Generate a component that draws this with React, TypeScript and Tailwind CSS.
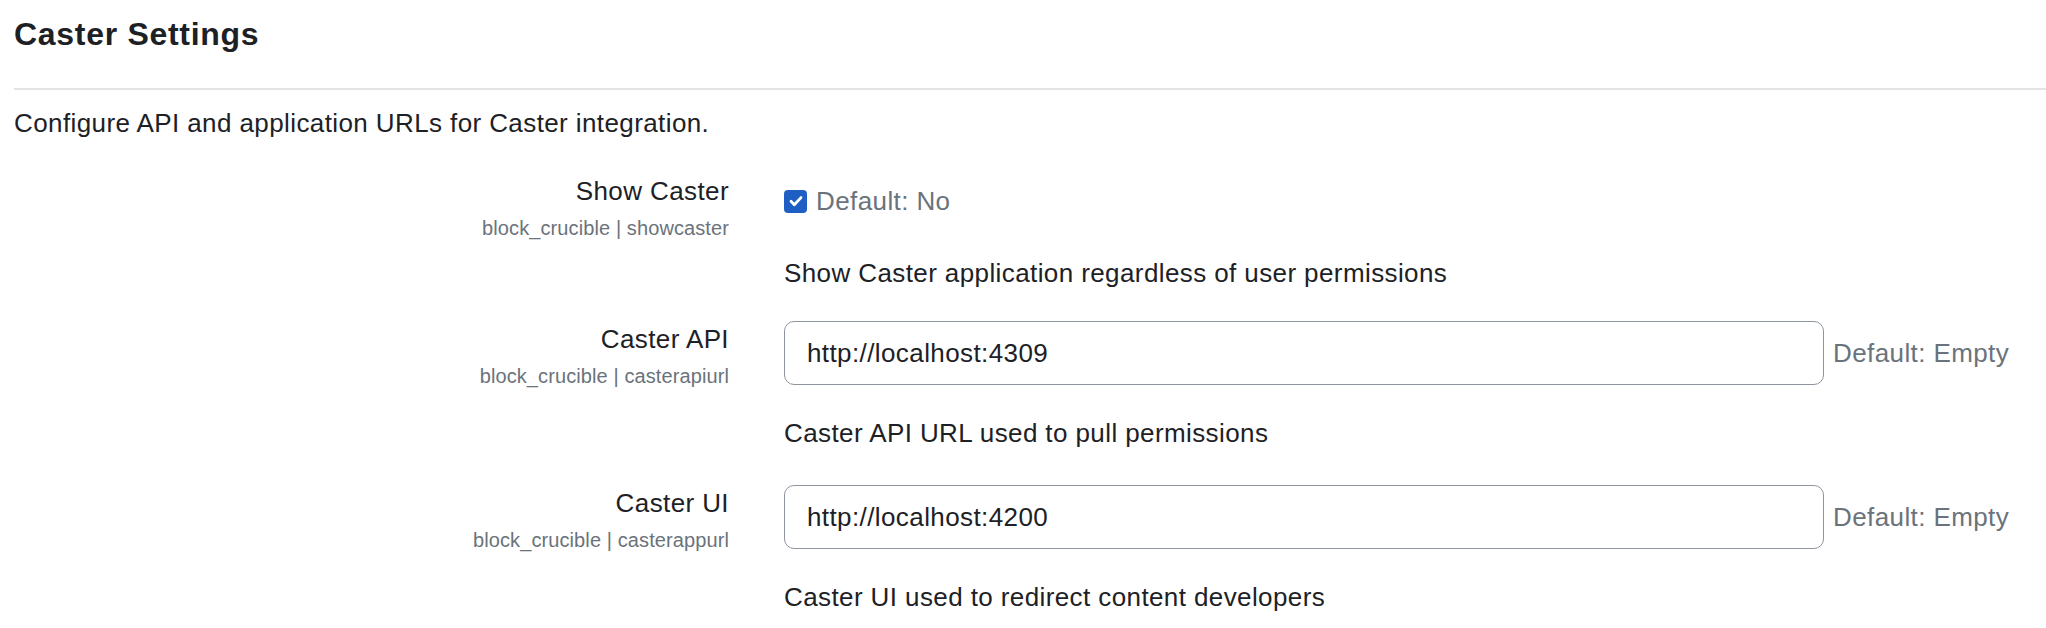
import type { ReactNode } from "react";

const FONT = { fontFamily: "'Liberation Sans', Arial, sans-serif" };

function Label({ title, name }: { title: string; name: string }) {
  return (
    <div className="flex flex-col items-end text-right">
      <div className="text-[26px] leading-[36px] tracking-[0.4px] text-[#1d2125]">{title}</div>
      <div className="mt-[5px] text-[20px] leading-[29px] tracking-[0.1px] text-[#6a737b]">block_crucible | {name}</div>
    </div>
  );
}

function Row({ title, name, children, description }: {
  title: string;
  name: string;
  children: ReactNode;
  description: string;
}) {
  return (
    <div className="grid grid-cols-[715px_1fr] gap-x-[55px]">
      <Label title={title} name={name} />
      <div>
        {children}
        <div className="mt-[30px] text-[26px] leading-[36px] tracking-[0.4px] text-[#1d2125]">{description}</div>
      </div>
    </div>
  );
}

function UrlInput({ value }: { value: string }) {
  return (
    <div className="flex items-center">
      <input
        readOnly
        value={value}
        className="h-[64px] w-[1040px] rounded-[10px] border-[1.5px] border-[#8f959e] bg-white px-[22px] text-[26px] tracking-[0.4px] text-[#1d2125] outline-none"
        style={FONT}
      />
      <span className="ml-[9px] text-[26px] tracking-[0.4px] text-[#6a737b]">Default: Empty</span>
    </div>
  );
}

export default function App() {
  return (
    <div className="min-h-screen bg-white pl-[14px]" style={FONT}>
      <h3 className="pt-[16px] text-[32px] font-bold leading-[37px] tracking-[0.7px] text-[#1d2125]">Caster Settings</h3>
      <div className="mt-[35px] h-[2px] bg-[#e4e4e4]" />
      <p className="mt-[15px] text-[26px] leading-[36px] tracking-[0.4px] text-[#1d2125]">
        Configure API and application URLs for Caster integration.
      </p>

      <div className="mt-[32px]">
        <Row
          title="Show Caster"
          name="showcaster"
          description="Show Caster application regardless of user permissions"
        >
          <div className="mt-[10px] flex items-center pb-[6px]">
            <div className="flex h-[23px] w-[23px] items-center justify-center rounded-[4px] bg-[#1f5fc4]">
              <svg width="16" height="16" viewBox="0 0 16 16" fill="none">
                <path d="M3 8.3l3.3 3.4L13 4.6" stroke="white" strokeWidth="2.8" strokeLinecap="round" strokeLinejoin="round" />
              </svg>
            </div>
            <span className="ml-[9px] text-[26px] leading-[36px] tracking-[0.4px] text-[#6a737b]">Default: No</span>
          </div>
        </Row>
      </div>

      <div className="mt-[30px]">
        <Row
          title="Caster API"
          name="casterapiurl"
          description="Caster API URL used to pull permissions"
        >
          <UrlInput value="http://localhost:4309" />
        </Row>
      </div>

      <div className="mt-[34px]">
        <Row
          title="Caster UI"
          name="casterappurl"
          description="Caster UI used to redirect content developers"
        >
          <UrlInput value="http://localhost:4200" />
        </Row>
      </div>
    </div>
  );
}
